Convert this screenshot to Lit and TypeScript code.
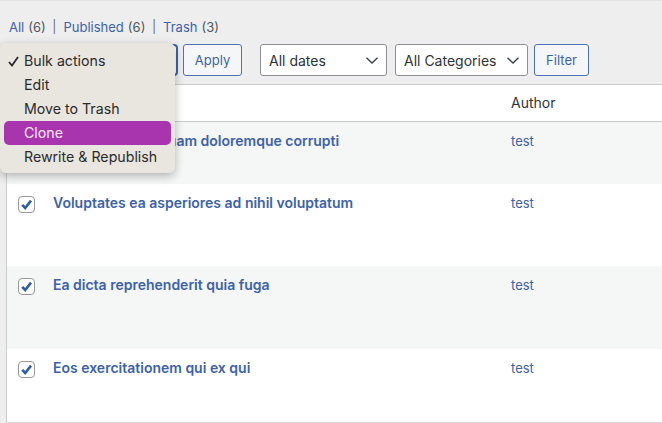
import { LitElement, css, html } from 'lit';
import { customElement } from 'lit/decorators.js';

const rows = [
  { title: 'Asperiores quisquam doloremque corrupti', height: 62, checked: true },
  { title: 'Voluptates ea asperiores ad nihil voluptatum', height: 82, checked: true },
  { title: 'Ea dicta reprehenderit quia fuga', height: 83, checked: true },
  { title: 'Eos exercitationem qui ex qui', height: 73, checked: true },
];

const chevron = html`<svg width="14" height="14" viewBox="0 0 14 14" fill="none" stroke="#3c434a" stroke-width="1.4"><path d="M1.5 4.8 7 10l5.5-5.2"/></svg>`;

@customElement('app-root')
export class AppRoot extends LitElement {
  static styles = css`
    :host {
      display: flex;
      flex-direction: column;
      position: relative;
      width: 662px;
      height: 423px;
      overflow: hidden;
      box-sizing: border-box;
      background: #eeeeef;
      border-top: 1px solid #e2e2e2;
      font-family: Inter, 'Liberation Sans', sans-serif;
      font-size: 13.5px;
      color: #2c3338;
    }
    a { color: #3b62ab; }
    .views {
      display: flex;
      align-items: center;
      height: 19px;
      margin: 16px 0 8px 9px;
      font-size: 13px;
      color: #50575e;
    }
    .views .sep { margin: 0 7px 0 6.5px; color: #6b6e72; font-size: 12.5px; }
    .views a { margin-right: 4px; }
    .toolbar {
      display: flex;
      align-items: stretch;
      height: 32px;
      margin-bottom: 8px;
      padding-left: 6px;
    }
    .bulk {
      width: 172px;
      box-sizing: border-box;
      border: 2px solid #3a66ad;
      border-radius: 4px;
      background: #fff;
    }
    .btn {
      display: flex;
      align-items: center;
      justify-content: center;
      box-sizing: border-box;
      border: 1px solid #4a72b4;
      border-radius: 3px;
      background: #f5f6f7;
      color: #3b62ab;
      font-size: 13px;
    }
    .apply { width: 59px; margin-left: 5px; margin-right: 18px; }
    .filter { width: 55px; }
    .select {
      display: flex;
      align-items: center;
      justify-content: space-between;
      box-sizing: border-box;
      padding: 0 7px 0 8px;
      border: 1px solid #8c8f94;
      border-radius: 3px;
      background: #fff;
      font-size: 14px;
      color: #2c3338;
    }
    .dates { width: 127px; margin-right: 8px; }
    .cats { width: 133px; margin-right: 6px; }
    .table {
      flex: 1;
      margin-left: 6px;
      background: #fff;
      border-left: 1px solid #c9cbce;
      border-top: 1px solid #c9cbce;
      border-bottom: 1px solid #d8d8d8;
      display: flex;
      flex-direction: column;
    }
    .head, .row {
      display: grid;
      grid-template-columns: 46px 458px 1fr;
    }
    .head {
      box-sizing: border-box;
      height: 37px;
      padding-bottom: 2px;
      align-items: center;
      border-bottom: 1px solid #c9cbce;
      font-size: 14px;
      color: #2c3338;
    }
    .row { box-sizing: border-box; padding-top: 9px; }
    .row:nth-child(even) { background: #f5f6f6; }
    .title { font-weight: 600; font-size: 14px; color: #3b62ab; line-height: 20px; }
    .author { font-size: 13px; color: #3b62ab; line-height: 20px; }
    .check {
      box-sizing: border-box;
      width: 17px;
      height: 17px;
      margin: 3px 0 0 11px;
      border: 1.5px solid #96989c;
      border-radius: 4px;
      background: #fff;
      display: flex;
      align-items: center;
      justify-content: center;
    }
    .menu {
      position: absolute;
      left: 0;
      top: 42px;
      width: 175px;
      box-sizing: border-box;
      padding: 6px 4px 4px;
      border-radius: 6px;
      background: #e9e6e0;
      box-shadow: 0 3px 10px rgba(0, 0, 0, 0.28);
      font-size: 14.2px;
      color: #2a2a2a;
    }
    .item {
      position: relative;
      height: 24px;
      line-height: 24px;
      padding-left: 20px;
      border-radius: 5px;
    }
    .item.active { background: #a835ad; color: #f6e9f6; }
    .tick { position: absolute; left: 4px; top: 7px; width: 11px; height: 11px; }
  `;

  render() {
    return html`
      <div class="views">
        <a>All</a>(6)<span class="sep">|</span>
        <a>Published</a>(6)<span class="sep">|</span>
        <a>Trash</a>(3)
      </div>
      <div class="toolbar">
        <div class="bulk"></div>
        <div class="btn apply">Apply</div>
        <div class="select dates">All dates ${chevron}</div>
        <div class="select cats">All Categories ${chevron}</div>
        <div class="btn filter">Filter</div>
      </div>
      <div class="table">
        <div class="head"><span></span><span></span><span>Author</span></div>
        ${rows.map(
          (r) => html`
            <div class="row" style="height:${r.height}px">
              <div class="check">
                ${r.checked
                  ? html`<svg width="13" height="13" viewBox="0 0 13 13" fill="none" stroke="#2f5ea8" stroke-width="2.6"><path d="M2.2 6.8 5.2 10 11 2.6"/></svg>`
                  : ''}
              </div>
              <div class="title">${r.title}</div>
              <div class="author">test</div>
            </div>
          `,
        )}
      </div>
      <div class="menu">
        <div class="item">
          <svg class="tick" viewBox="0 0 11 11" fill="none" stroke="#2a2a2a" stroke-width="1.8"><path d="M1 6 4 9.5 10 1"/></svg>
          Bulk actions
        </div>
        <div class="item">Edit</div>
        <div class="item">Move to Trash</div>
        <div class="item active">Clone</div>
        <div class="item">Rewrite &amp; Republish</div>
      </div>
    `;
  }
}
